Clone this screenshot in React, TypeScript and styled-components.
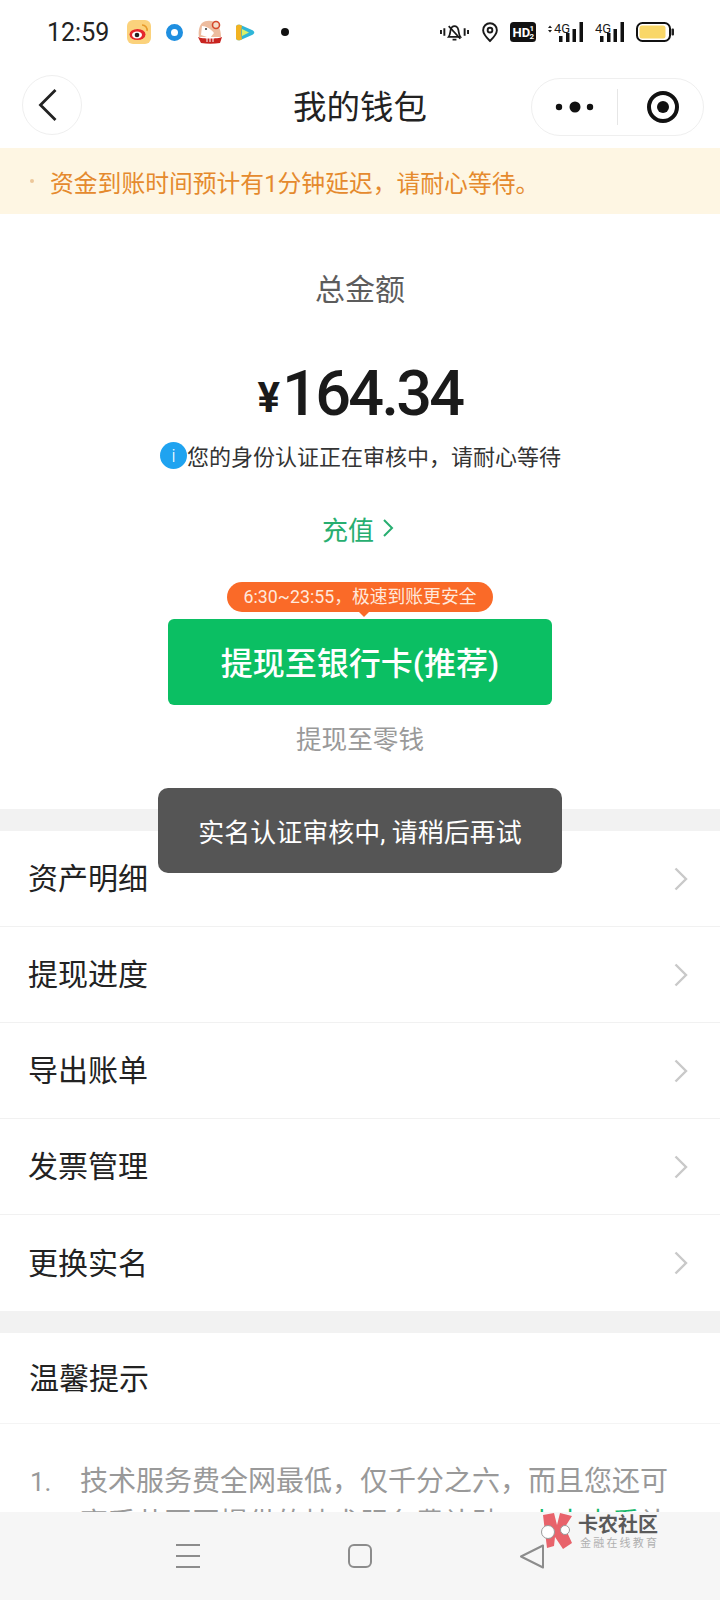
import React from "react";
import styled, { createGlobalStyle } from "styled-components";

const Global = createGlobalStyle`
  html, body { margin: 0; padding: 0; background: #fff; }
  * { box-sizing: border-box; }
  body { font-family: "Roboto", "Noto Sans CJK SC", sans-serif; }
`;

const Phone = styled.div`
  position: relative;
  width: 720px;
  height: 1600px;
  display: flex;
  flex-direction: column;
  overflow: hidden;
  background: #fff;
  color: #1c1c1c;
`;

/* status bar */
const StatusBar = styled.div`
  height: 64px;
  flex: none;
  display: flex;
  align-items: center;
  justify-content: space-between;
  padding: 0 46px 0 47px;
`;
const StatusGroup = styled.div`
  display: flex;
  align-items: center;
`;
const Time = styled.span`
  width: 62px;
  font-size: 25px;
  font-weight: 400;
  line-height: 30px;
  color: #222;
  margin-top: 1px;
`;
const StatusSvg = styled.svg<{ $gap?: number }>`
  display: block;
  flex: none;
  margin-left: ${(p) => p.$gap ?? 0}px;
`;

/* nav */
const NavBar = styled.div`
  height: 84px;
  flex: none;
  display: grid;
  grid-template-columns: 1fr auto 1fr;
  align-items: center;
  padding: 0 16px;
`;
const BackButton = styled.div`
  width: 60px;
  height: 60px;
  border: 1px solid #efefef;
  border-radius: 50%;
  display: flex;
  align-items: center;
  justify-content: center;
  padding-right: 8px;
  justify-self: start;
  margin: -2px 0 0 6px;
`;
const Title = styled.div`
  font-size: 33.5px;
  line-height: 44px;
  color: #222;
  margin-top: 3px;
`;
const Capsule = styled.div`
  justify-self: end;
  width: 173px;
  height: 58px;
  margin-top: 2px;
  border: 1px solid #efefef;
  border-radius: 29px;
  display: grid;
  grid-template-columns: 85px 1px 1fr;
  align-items: center;
  justify-items: center;
`;
const CapsuleLine = styled.div`
  width: 1px;
  height: 36px;
  background: #e6e6e6;
`;
const TargetIcon = styled.svg`
  margin-left: 4px;
`;

/* notice */
const Notice = styled.div`
  height: 66px;
  flex: none;
  background: #fef6e3;
  display: flex;
  align-items: center;
  padding-left: 30px;
  color: #e58a2e;
  font-size: 23.8px;
`;
const NoticeDot = styled.span`
  width: 4px;
  height: 4px;
  border-radius: 50%;
  background: #ecc79a;
  margin-right: 16px;
`;

/* main */
const Main = styled.div`
  flex: 1;
  min-height: 0;
  overflow: hidden;
`;
const Summary = styled.section`
  display: flex;
  flex-direction: column;
  align-items: center;
  padding: 56px 0 51px;
`;
const TotalLabel = styled.div`
  font-size: 30px;
  line-height: 40px;
  color: #5c5c5c;
`;
const Amount = styled.div`
  margin-top: 43px;
  height: 80px;
  display: flex;
  align-items: center;
  font-family: "Roboto", sans-serif;
  font-weight: 500;
  font-size: 63px;
  letter-spacing: -2.700px;
  color: #1a1a1a;
`;
const Currency = styled.span`
  font-size: 42px;
  font-weight: 700;
  margin-top: 8px;
  margin-right: 2px;
  letter-spacing: 0;
`;
const InfoRow = styled.div`
  margin-top: 7px;
  height: 30px;
  display: flex;
  align-items: center;
  font-size: 22px;
  color: #333;
  padding-left: 1px;
`;
const InfoBadge = styled.span`
  width: 27px;
  height: 27px;
  flex: none;
  border-radius: 50%;
  background: #1fa3f0;
  color: #fff;
  font-family: "Roboto", sans-serif;
  font-size: 18px;
  font-weight: 300;
  line-height: 27px;
  text-align: center;
`;
const Recharge = styled.div`
  margin: 38px 4px 0 0;
  height: 40px;
  display: flex;
  align-items: center;
  gap: 8px;
  font-size: 26px;
  color: #27ae70;
`;
const ButtonWrap = styled.div`
  position: relative;
  margin-top: 71px;
  width: 384px;
`;
const PrimaryButton = styled.div`
  height: 86px;
  border-radius: 6px;
  background: #0bbf63;
  color: #fff;
  font-size: 32px;
  font-weight: 500;
  line-height: 90px;
  text-align: center;
`;
const Tip = styled.div`
  position: absolute;
  left: 59px;
  top: -37px;
  width: 266px;
  height: 30px;
  border-radius: 15px;
  background: #fa6a28;
  color: #ffe8dc;
  font-size: 17.800px;
  line-height: 29px;
  text-align: center;
  white-space: nowrap;
  &::after {
    content: "";
    position: absolute;
    left: 131px;
    top: 29px;
    border: 6px solid transparent;
    border-top-color: #fa6a28;
    border-bottom: 0;
  }
`;
const SecondaryLink = styled.div`
  margin-top: 17px;
  font-size: 25.600px;
  line-height: 36px;
  color: #999;
`;

/* menu */
const Menu = styled.div`
  border-top: 22px solid #f2f2f2;
  border-bottom: 22px solid #f2f2f2;
`;
const MenuRow = styled.div`
  height: 96px;
  display: flex;
  align-items: center;
  justify-content: space-between;
  padding: 0 32px 5px 28px;
  font-size: 30px;
  color: #222;
  border-bottom: 1px solid #f1f1f1;
  &:last-child { border-bottom: 0; }
`;
const RowChevron = styled.svg`
  margin-top: 5px;
`;

/* tips */
const TipsTitle = styled.div`
  height: 91px;
  display: flex;
  align-items: center;
  padding: 0 0 5px 29px;
  font-size: 30px;
  color: #222;
  border-bottom: 1px solid #f4f4f4;
`;
const TipItem = styled.div`
  display: grid;
  grid-template-columns: 50px 1fr;
  padding: 37px 50px 0 30px;
  font-size: 28px;
  line-height: 42px;
  color: #999;
`;
const TipNo = styled.span`
  font-size: 26px;
`;
const TipLink = styled.span`
  color: #14b869;
`;

/* bottom */
const BottomNav = styled.div`
  height: 88px;
  flex: none;
  background: #f6f6f6;
  display: grid;
  grid-template-columns: repeat(3, 172px);
  justify-content: center;
  align-items: center;
  justify-items: center;
`;

/* watermark */
const Watermark = styled.div`
  position: absolute;
  left: 539px;
  top: 1513px;
  display: flex;
  gap: 5px;
`;
const MarkText = styled.div`
  display: flex;
  flex-direction: column;
  align-items: flex-start;
`;
const MarkName = styled.span`
  font-size: 20px;
  line-height: 24px;
  font-weight: 700;
  color: #5a5a5a;
  white-space: nowrap;
`;
const MarkSub = styled.span`
  font-size: 11px;
  line-height: 13px;
  letter-spacing: 2.200px;
  color: #b0b0b0;
  white-space: nowrap;
  margin-left: 2px;
`;

/* toast */
const Toast = styled.div`
  position: absolute;
  left: 158px;
  top: 788px;
  width: 404px;
  height: 85px;
  padding-top: 3px;
  border-radius: 10px;
  background: #555;
  color: #fff;
  font-size: 26px;
  line-height: 85px;
  text-align: center;
  white-space: nowrap;
`;

const Chevron = () => (
  <RowChevron width="14" height="24" viewBox="0 0 14 24" fill="none">
    <path d="M1.500 1.500 12 12 1.500 22.500" stroke="#c9c9c9" strokeWidth="2.400" />
  </RowChevron>
);

const menuItems = ["资产明细", "提现进度", "导出账单", "发票管理", "更换实名"];

export default function App() {
  return (
    <Phone>
      <Global />
      <StatusBar>
        <StatusGroup>
          <Time>12:59</Time>
          <StatusSvg $gap={18} width="24" height="24" viewBox="0 0 24 24">
            <rect width="24" height="24" rx="6" fill="#fbd27c" />
            <ellipse cx="10.500" cy="14.500" rx="8" ry="5.500" fill="#e5262c" />
            <ellipse cx="10" cy="15" rx="5" ry="3.400" fill="#fff" />
            <circle cx="10" cy="15" r="2.300" fill="#222" />
            <path d="M15 5a5 5 0 0 1 5 6" stroke="#e79a2a" strokeWidth="1.600" fill="none" />
          </StatusSvg>
          <StatusSvg $gap={15} width="17" height="17" viewBox="0 0 17 17">
            <circle cx="8.500" cy="8.500" r="6" fill="none" stroke="#1f8fe0" strokeWidth="5" />
          </StatusSvg>
          <StatusSvg $gap={14} width="26" height="24" viewBox="0 0 26 24">
            <path d="M5 3C9 0 16 0 20 4c3 3 4 9 4 13H2C1 12 2 6 5 3z" fill="#edbc9f" />
            <circle cx="19" cy="5" r="3.500" fill="#f4dcc8" stroke="#d5482c" strokeWidth="1.600" />
            <path d="M5 6c4 0 9 3 12 7l-4 5-9-3z" fill="#fff" />
            <circle cx="9" cy="9" r="1" fill="#333" />
            <path d="M1 17c4 2 20 2 24 0l-2 6c-6 1-13 1-19 0z" fill="#c8231f" />
            <path d="M10 18v4M13 18v4M16 18v4" stroke="#fff" strokeWidth="1" />
          </StatusSvg>
          <StatusSvg $gap={11} width="21" height="17" viewBox="0 0 21 17">
            <path d="M2 3C2 1 4 .5 6 .8L18 6c3 1.300 3 3.700 0 5L6 16.200C4 16.500 2 16 2 14z" fill="#2fb6d8" />
            <path d="M2 3C2 1 4 .5 6 .8l2 1c-1 4-1 9 0 13.400l-2 1C4 16.500 2 16 2 14z" fill="#f2b322" />
            <path d="M8 5l7 3.500-7 3.500z" fill="#d8f06a" />
          </StatusSvg>
          <StatusSvg $gap={26} width="8" height="8" viewBox="0 0 8 8">
            <circle cx="4" cy="4" r="4" fill="#111" />
          </StatusSvg>
        </StatusGroup>
        <StatusGroup>
          <StatusSvg width="29" height="20" viewBox="0 0 30 20" fill="none" stroke="#1a1a1a" strokeWidth="1.800">
            <path d="M9 15c1.500-2 1.500-5 2-7 .5-2.500 2-4 4-4s3.500 1.500 4 4c.5 2 .5 5 2 7z" />
            <path d="M13 18h4M9 4l12 13" />
            <path d="M1 8v4M4.500 6v8M25.500 6v8M29 8v4" strokeWidth="2" />
          </StatusSvg>
          <StatusSvg $gap={13} width="16" height="21" viewBox="0 0 17 21" fill="none" stroke="#1a1a1a" strokeWidth="2">
            <path d="M8.500 19.500C4 15 1.200 11.500 1.200 8a7.300 7.300 0 0 1 14.600 0c0 3.500-2.800 7-7.300 11.500z" />
            <circle cx="8.500" cy="8" r="2.500" />
          </StatusSvg>
          <StatusSvg $gap={12} width="26" height="20" viewBox="0 0 26 20">
            <rect width="26" height="20" rx="3.500" fill="#111" />
            <text x="2.500" y="15" fontFamily="Roboto, sans-serif" fontWeight="700" fontSize="13" fill="#fff">HD</text>
            <text x="19.500" y="9" fontFamily="Roboto, sans-serif" fontWeight="700" fontSize="8" fill="#fff">1</text>
            <text x="19.500" y="17" fontFamily="Roboto, sans-serif" fontWeight="700" fontSize="8" fill="#fff">2</text>
          </StatusSvg>
          <StatusSvg $gap={11} width="36" height="20" viewBox="0 0 36 20">
            <path d="M1 6l2-2.500L5 6zM1 8l2 2.500L5 8z" fill="#1a1a1a" />
            <text x="7" y="11" fontFamily="Roboto, sans-serif" fontSize="13" fill="#1a1a1a">4G</text>
            <rect x="12" y="14" width="3.500" height="6" fill="#111" />
            <rect x="19" y="11" width="3.500" height="9" fill="#111" />
            <rect x="25.500" y="7" width="3.500" height="13" fill="#111" />
            <rect x="32.500" y="0" width="3.500" height="20" fill="#111" />
          </StatusSvg>
          <StatusSvg $gap={12} width="29" height="20" viewBox="0 0 29 20">
            <text x="0" y="11" fontFamily="Roboto, sans-serif" fontSize="13" fill="#1a1a1a">4G</text>
            <rect x="5" y="14" width="3.500" height="6" fill="#111" />
            <rect x="12" y="11" width="3.500" height="9" fill="#111" />
            <rect x="18.500" y="7" width="3.500" height="13" fill="#111" />
            <rect x="25.500" y="0" width="3.500" height="20" fill="#111" />
          </StatusSvg>
          <StatusSvg $gap={12} width="38" height="20" viewBox="0 0 38 20">
            <rect x="1" y="1" width="33" height="18" rx="5.500" fill="#fff" stroke="#111" strokeWidth="2" />
            <rect x="3.500" y="3.500" width="26" height="13" rx="2.500" fill="#f9d768" />
            <rect x="35.500" y="6.500" width="2.500" height="7" rx="1" fill="#222" />
          </StatusSvg>
        </StatusGroup>
      </StatusBar>

      <NavBar>
        <BackButton>
          <svg width="20" height="34" viewBox="0 0 20 34" fill="none">
            <path d="M17.500 2 2.500 17l15 15" stroke="#222" strokeWidth="2.800" />
          </svg>
        </BackButton>
        <Title>我的钱包</Title>
        <Capsule>
          <svg width="40" height="14" viewBox="0 0 40 14" fill="#111">
            <circle cx="4" cy="7" r="3.200" />
            <circle cx="20" cy="7" r="5.500" />
            <circle cx="35" cy="7" r="3.200" />
          </svg>
          <CapsuleLine />
          <TargetIcon width="34" height="34" viewBox="0 0 34 34">
            <circle cx="17" cy="17" r="14" fill="none" stroke="#111" strokeWidth="4" />
            <circle cx="17" cy="17" r="6" fill="#111" />
          </TargetIcon>
        </Capsule>
      </NavBar>

      <Notice>
        <NoticeDot />
        资金到账时间预计有1分钟延迟，请耐心等待。
      </Notice>

      <Main>
        <Summary>
          <TotalLabel>总金额</TotalLabel>
          <Amount>
            <Currency>¥</Currency>164.34
          </Amount>
          <InfoRow>
            <InfoBadge>i</InfoBadge>您的身份认证正在审核中，请耐心等待
          </InfoRow>
          <Recharge>
            充值
            <svg width="12" height="20" viewBox="0 0 12 20" fill="none">
              <path d="M2 2l8 8-8 8" stroke="#27ae70" strokeWidth="2" />
            </svg>
          </Recharge>
          <ButtonWrap>
            <Tip>6:30~23:55，极速到账更安全</Tip>
            <PrimaryButton>提现至银行卡(推荐)</PrimaryButton>
          </ButtonWrap>
          <SecondaryLink>提现至零钱</SecondaryLink>
        </Summary>

        <Menu>
          {menuItems.map((item) => (
            <MenuRow key={item}>
              {item}
              <Chevron />
            </MenuRow>
          ))}
        </Menu>

        <TipsTitle>温馨提示</TipsTitle>
        <TipItem>
          <TipNo>1.</TipNo>
          <div>
            技术服务费全网最低，仅千分之六，而且您还可享受共同网提供的技术服务费补贴，
            <TipLink>点击查看</TipLink>补
          </div>
        </TipItem>
      </Main>

      <BottomNav>
        <svg width="26" height="26" viewBox="0 0 26 26" fill="none" stroke="#8c8c8c" strokeWidth="2">
          <path d="M1 2h24M1 13h24M1 24h24" />
        </svg>
        <svg width="24" height="24" viewBox="0 0 24 24" fill="none">
          <rect x="1" y="1" width="22" height="22" rx="5" stroke="#8c8c8c" strokeWidth="2" />
        </svg>
        <svg width="26" height="25" viewBox="0 0 26 25" fill="none">
          <path d="M24 1.500 2 12.500l22 11z" stroke="#8c8c8c" strokeWidth="2" strokeLinejoin="round" />
        </svg>
      </BottomNav>

      <Watermark>
        <svg width="34" height="36" viewBox="0 0 34 36">
          <path d="M4 2 15 0l3 12 3-12 12 3-7 11 2 5 5 11-9 6-8-12-1 9-7 2z" fill="#e8636b" />
          <circle cx="9" cy="19" r="6.500" fill="#fff" stroke="#9a9a9a" strokeWidth="1" />
          <circle cx="26" cy="17" r="4.500" fill="#fff" stroke="#9a9a9a" strokeWidth="1" />
        </svg>
        <MarkText>
          <MarkName>卡农社区</MarkName>
          <MarkSub>金融在线教育</MarkSub>
        </MarkText>
      </Watermark>

      <Toast>实名认证审核中, 请稍后再试</Toast>
    </Phone>
  );
}
